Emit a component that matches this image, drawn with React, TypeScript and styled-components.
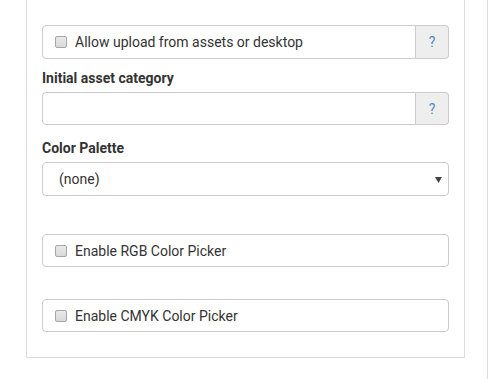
import React, { FC } from 'react';
import styled, { createGlobalStyle } from 'styled-components';

const GlobalStyle = createGlobalStyle`
  html, body {
    margin: 0;
    padding: 0;
    background: #fff;
  }
  body {
    font-family: Roboto, "Liberation Sans", Arial, sans-serif;
    font-size: 14px;
    color: #333;
  }
`;

const Page = styled.div`
  display: flex;
  align-items: flex-start;
  width: 488px;
  height: 379px;
  box-sizing: border-box;
  border-right: 1px solid #ddd;
  overflow: hidden;
`;

const Panel = styled.div`
  display: flex;
  flex-direction: column;
  width: 439px;
  margin-left: 26px;
  box-sizing: border-box;
  padding: 25px 15px 25px 15px;
  border: 1px solid #ddd;
  border-top: none;
`;

const Group = styled.div<{ $top?: number }>`
  display: flex;
  flex-direction: column;
  margin-top: ${(p) => p.$top ?? 0}px;
`;

const Label = styled.label`
  display: block;
  font-weight: 700;
  font-size: 14px;
  line-height: 20px;
  margin-bottom: 4px;
  color: #333;
`;

const InputGroup = styled.div<{ $height?: number }>`
  display: flex;
  height: ${(p) => p.$height ?? 33}px;
  box-sizing: border-box;
`;

const Field = styled.div<{ $addon?: boolean }>`
  flex: 1;
  display: flex;
  align-items: center;
  box-sizing: border-box;
  border: 1px solid #ccc;
  border-radius: ${(p) => (p.$addon ? '4px 0 0 4px' : '4px')};
  padding: 0 12px;
  background: #fff;
`;

const Addon = styled.div`
  display: flex;
  align-items: center;
  justify-content: center;
  width: 33px;
  box-sizing: border-box;
  border: 1px solid #ccc;
  border-left: none;
  border-radius: 0 4px 4px 0;
  background: #eee;
  color: #4f8ac6;
  font-size: 14px;
`;

const Check = styled.span`
  display: inline-block;
  width: 12px;
  height: 12px;
  box-sizing: border-box;
  border: 1px solid #a6a6a6;
  border-radius: 2px;
  background: linear-gradient(#e9e9e9, #d9d9d9);
  margin-right: 8px;
  flex-shrink: 0;
`;

const CheckText = styled.span`
  font-size: 14px;
  color: #333;
  white-space: nowrap;
`;

const Select = styled.div`
  position: relative;
  display: flex;
  align-items: center;
  height: 34px;
  box-sizing: border-box;
  border: 1px solid #ccc;
  border-radius: 4px;
  padding: 0 16px;
  font-size: 14px;
  color: #333;
`;

const Arrow = styled.svg`
  position: absolute;
  right: 6px;
  top: 14px;
`;

const CheckRow: FC<{ text: string; help?: boolean; height?: number }> = ({
  text,
  help,
  height,
}) => (
  <InputGroup $height={height}>
    <Field $addon={help}>
      <Check />
      <CheckText>{text}</CheckText>
    </Field>
    {help && <Addon>?</Addon>}
  </InputGroup>
);

const App: FC = () => (
  <>
    <GlobalStyle />
    <Page>
      <Panel>
        <CheckRow text="Allow upload from assets or desktop" help height={34} />
        <Group $top={9}>
          <Label>Initial asset category</Label>
          <InputGroup>
            <Field $addon />
            <Addon>?</Addon>
          </InputGroup>
        </Group>
        <Group $top={13}>
          <Label>Color Palette</Label>
          <Select>
            (none)
            <Arrow width="7" height="6" viewBox="0 0 7 6">
              <path d="M0 0 H7 L3.5 6 Z" fill="#444" />
            </Arrow>
          </Select>
        </Group>
        <Group $top={38}>
          <CheckRow text="Enable RGB Color Picker" />
        </Group>
        <Group $top={32}>
          <CheckRow text="Enable CMYK Color Picker" />
        </Group>
      </Panel>
    </Page>
  </>
);

export default App;
